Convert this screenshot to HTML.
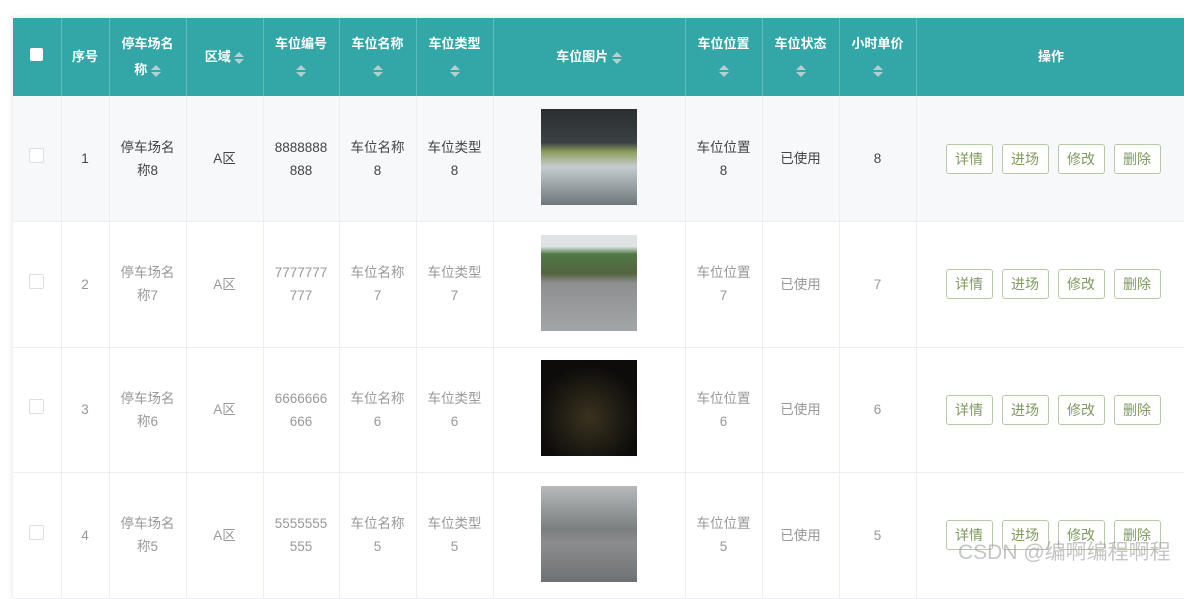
<!DOCTYPE html><html><head><meta charset="utf-8"><style>
body{margin:0;width:1184px;height:571px;overflow:hidden;background:#fff;font-family:"Liberation Sans","Noto Sans CJK SC",sans-serif;position:relative}
table{position:absolute;left:13px;top:18px;border-collapse:collapse;table-layout:fixed;width:1177px;box-shadow:0 0 6px rgba(0,0,0,.12)}
th{background:#33a7a7;color:#fff;font-size:13px;font-weight:bold;height:78px;border-right:1px solid #5dbcbc;text-align:center;line-height:26px;padding:0 6px;box-sizing:border-box}
td{height:125.5px;border-right:1px solid #ebeef5;border-bottom:1px solid #ebeef5;text-align:center;font-size:13.5px;line-height:23px;color:#999;padding:0 8px;box-sizing:border-box;word-break:break-all;font-weight:400}
tr.a td{background:#f7f8fa;color:#444}
.s{display:inline-block;width:10px;height:14px;vertical-align:middle;position:relative}
.s:before{content:"";position:absolute;left:0;top:1px;border:5px solid transparent;border-bottom:5px solid #b3cfcf;border-top:0}
.s:after{content:"";position:absolute;left:0;top:8px;border:5px solid transparent;border-top:5px solid #b3cfcf;border-bottom:0}
.cb{display:inline-block;width:13px;height:13px;border:1px solid #dcdfe6;border-radius:2px;background:#fff}
.hcb{display:inline-block;width:13px;height:13px;background:#fff;border-radius:2px}
.b{display:inline-block;width:47px;height:30px;line-height:28px;box-sizing:border-box;border:1px solid #b8c8a6;border-radius:3px;color:#7f9a5f;font-size:14px;margin:0 4.5px;background:#fff}
.img{display:block;margin:-3px auto 0;width:96px;height:96px}
</style></head><body>
<table>
<colgroup><col style="width:48px"><col style="width:48px"><col style="width:77px"><col style="width:77px"><col style="width:76px"><col style="width:77px"><col style="width:77px"><col style="width:192px"><col style="width:77px"><col style="width:77px"><col style="width:77px"><col style="width:274px"></colgroup>
<tr><th><span class="hcb"></span></th><th>序号</th><th>停车场名称 <span class="s"></span></th><th>区域 <span class="s"></span></th><th>车位编号<br><span class="s"></span></th><th>车位名称<br><span class="s"></span></th><th>车位类型<br><span class="s"></span></th><th>车位图片 <span class="s"></span></th><th>车位位置<br><span class="s"></span></th><th>车位状态<br><span class="s"></span></th><th>小时单价<br><span class="s"></span></th><th style="padding-right:10px">操作</th></tr>
<tr class="a"><td><span class="cb"></span></td><td>1</td><td>停车场名称8</td><td>A区</td><td>8888888888</td><td>车位名称8</td><td>车位类型8</td><td><div class="img" style="background:linear-gradient(#2a2e30 0%,#3b4144 35%,#8fa060 45%,#c6cdd0 60%,#6f777a 100%)"></div></td><td>车位位置8</td><td>已使用</td><td>8</td><td style="padding-right:8px"><span class="b">详情</span><span class="b">进场</span><span class="b">修改</span><span class="b">删除</span></td></tr>
<tr><td><span class="cb"></span></td><td>2</td><td>停车场名称7</td><td>A区</td><td>7777777777</td><td>车位名称7</td><td>车位类型7</td><td><div class="img" style="background:linear-gradient(#dfe3e6 0%,#dfe3e6 12%,#4f7a45 20%,#55633f 40%,#8d8f90 50%,#a3a6a8 100%)"></div></td><td>车位位置7</td><td>已使用</td><td>7</td><td style="padding-right:8px"><span class="b">详情</span><span class="b">进场</span><span class="b">修改</span><span class="b">删除</span></td></tr>
<tr><td><span class="cb"></span></td><td>3</td><td>停车场名称6</td><td>A区</td><td>6666666666</td><td>车位名称6</td><td>车位类型6</td><td><div class="img" style="background:radial-gradient(circle at 50% 60%,#3a3220,#0d0c0a 70%)"></div></td><td>车位位置6</td><td>已使用</td><td>6</td><td style="padding-right:8px"><span class="b">详情</span><span class="b">进场</span><span class="b">修改</span><span class="b">删除</span></td></tr>
<tr><td><span class="cb"></span></td><td>4</td><td>停车场名称5</td><td>A区</td><td>5555555555</td><td>车位名称5</td><td>车位类型5</td><td><div class="img" style="background:linear-gradient(#b7b9bb 0%,#7b7f80 45%,#8a8c8e 60%,#6f7274 100%)"></div></td><td>车位位置5</td><td>已使用</td><td>5</td><td style="padding-right:8px"><span class="b">详情</span><span class="b">进场</span><span class="b">修改</span><span class="b">删除</span></td></tr>
</table>
<div style="position:absolute;left:958px;top:536px;font-size:21px;color:rgba(150,150,150,.55);white-space:nowrap">CSDN @编啊编程啊程</div>
</body></html>
